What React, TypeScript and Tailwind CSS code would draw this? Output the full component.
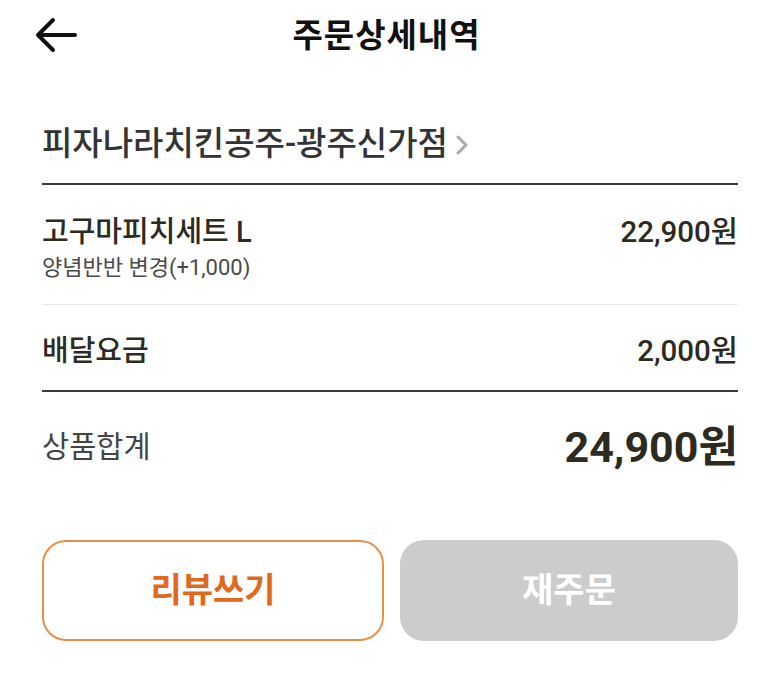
const FONT = { fontFamily: 'Roboto, "Noto Sans CJK KR", sans-serif' };

function BackArrow() {
  return (
    <svg width="42" height="36" viewBox="0 0 42 36" fill="none">
      <path d="M40 18H4M18 3L3 18l15 15" stroke="#111" strokeWidth="4" strokeLinecap="round" strokeLinejoin="round" />
    </svg>
  );
}

function Row({ label, price, sub }: { label: string; price: string; sub?: string }) {
  return (
    <div className="flex items-start justify-between">
      <div className="flex flex-col">
        <span className="text-[29px] font-medium leading-[38px] text-[#2d2a22]">{label}</span>
        {sub && <span className="mt-[2px] text-[22px] leading-[30px] text-[#4a4a4a]">{sub}</span>}
      </div>
      <span className="text-[29.5px] font-medium leading-[38px] text-[#2d2a22]">{price}</span>
    </div>
  );
}

export default function App() {
  return (
    <div className="h-[679px] w-[773px] bg-white" style={FONT}>
      <header className="relative flex h-[70px] items-center justify-center">
        <button type="button" className="absolute left-[35px] top-[17px]">
          <BackArrow />
        </button>
        <h1 className="mt-[2px] text-[33px] font-bold tracking-[1px] text-[#111]">주문상세내역</h1>
      </header>

      <div className="pl-[42px] pr-[35px]">
        <div className="flex h-[115px] items-center gap-[8px] border-b-2 border-[#3d3a30] pt-[34px]">
          <span className="text-[33px] font-medium text-[#333]">피자나라치킨공주-광주신가점</span>
          <svg width="12" height="20" viewBox="0 0 12 20" fill="none" className="mt-[2px]">
            <path d="M2 2l8 8-8 8" stroke="#aaa" strokeWidth="3" strokeLinecap="round" strokeLinejoin="round" />
          </svg>
        </div>

        <div className="border-b border-[#e6e6e6] pb-[21px] pt-[28px]">
          <Row label="고구마피치세트 L" price="22,900원" sub="양념반반 변경(+1,000)" />
        </div>

        <div className="border-b-2 border-[#3d3a30] pb-[20px] pt-[27px]">
          <Row label="배달요금" price="2,000원" />
        </div>

        <div className="flex items-center justify-between pt-[29px]">
          <span className="text-[29.5px] text-[#444]">상품합계</span>
          <span className="text-[43px] font-bold leading-[52px] text-[#2d2a20]">24,900원</span>
        </div>

        <div className="mt-[67px] flex gap-[16px]">
          <button
            type="button"
            className="flex h-[101px] flex-1 items-center justify-center rounded-[24px] border-2 border-[#e8904a] bg-white text-[34px] font-bold text-[#e2681e]"
          >
            리뷰쓰기
          </button>
          <button
            type="button"
            className="flex h-[101px] flex-1 items-center justify-center rounded-[24px] bg-[#cccccc] text-[34px] font-bold text-white"
          >
            재주문
          </button>
        </div>
      </div>
    </div>
  );
}
